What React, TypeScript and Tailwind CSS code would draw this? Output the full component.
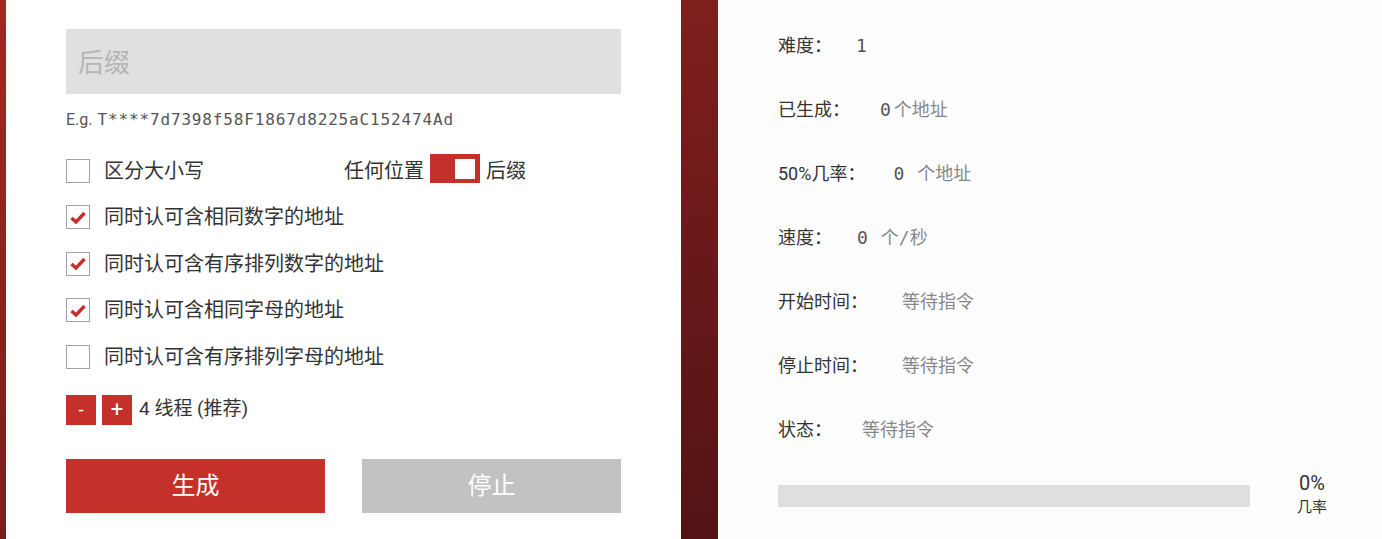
import React from 'react';

const RED = 'bg-[#c5302a]';

function Check({ checked }: { checked: boolean }) {
    return (
        <div className="w-[24px] h-[24px] border border-[#9ea3a8] bg-white flex items-center justify-center shrink-0">
            {checked && (
                <svg width="16" height="13" viewBox="0 0 16 13">
                    <path d="M1.5 7 L6 11 L14.5 2" fill="none" stroke="#c5302a" strokeWidth="3.4" strokeLinejoin="miter" />
                </svg>
            )}
        </div>
    );
}

function OptionRow({ label, checked }: { label: string; checked: boolean }) {
    return (
        <div className="flex items-center h-[24px]">
            <Check checked={checked} />
            <span className="ml-[14px] text-[20px] leading-[24px] text-[#333]">{label}</span>
        </div>
    );
}

function StatRow({ children }: { children: React.ReactNode }) {
    return <div className="h-[64px] flex items-center text-[18px] text-[#333]">{children}</div>;
}

const mono = "font-['DejaVu_Sans_Mono',monospace] text-[#555]";

export default function App() {
    return (
        <div className="w-[1382px] h-[539px] flex overflow-hidden font-[Roboto,'Noto_Sans_CJK_SC',sans-serif]">
            {/* left edge strip */}
            <div className="w-[6px] h-full bg-gradient-to-b from-[#a62621] to-[#7c1c1a]" />

            {/* settings card */}
            <div className="w-[675px] h-full bg-white px-[60px] pt-[29px]">
                <div className="h-[65px] bg-[#e0e0e0] flex items-center pl-[12px] pt-[3px] text-[26px] text-[#b5b5b5]">后缀</div>

                <div className="mt-[16px] h-[20px] flex items-center text-[16px] text-[#555]">
                    <span>E.g.</span>
                    <span className={`ml-[5px] ${mono} tracking-[0.85px]`}>T****7d7398f58F1867d8225aC152474Ad</span>
                </div>

                <div className="mt-[24px] flex items-end h-[29px]">
                    <div className="w-[278px] flex items-center h-[24px]">
                        <Check checked={false} />
                        <span className="ml-[14px] text-[20px] leading-[24px] text-[#333]">区分大小写</span>
                    </div>
                    <span className="text-[20px] leading-[24px] text-[#333]">任何位置</span>
                    <div className={`ml-[6px] w-[50px] h-[29px] ${RED} flex items-center justify-end pr-[5px]`}>
                        <div className="w-[20px] h-[20px] bg-white" />
                    </div>
                    <span className="ml-[6px] text-[20px] leading-[24px] text-[#333]">后缀</span>
                </div>

                <div className="mt-[22px] flex flex-col gap-[22.5px]">
                    <OptionRow label="同时认可含相同数字的地址" checked />
                    <OptionRow label="同时认可含有序排列数字的地址" checked />
                    <OptionRow label="同时认可含相同字母的地址" checked />
                    <OptionRow label="同时认可含有序排列字母的地址" checked={false} />
                </div>

                <div className="mt-[26px] flex items-center h-[30px]">
                    <div className={`w-[30px] h-[30px] ${RED} text-white text-[18px] flex items-center justify-center`}>-</div>
                    <div className={`ml-[6px] w-[30px] h-[30px] ${RED} text-white text-[22px] flex items-center justify-center`}>+</div>
                    <span className="ml-[7px] text-[19px] text-[#333]">4 线程 (推荐)</span>
                </div>

                <div className="mt-[34px] flex justify-between">
                    <div className={`w-[259px] h-[54px] ${RED} text-white text-[24px] flex items-center justify-center`}>生成</div>
                    <div className="w-[259px] h-[54px] bg-[#c2c2c2] text-white text-[24px] flex items-center justify-center">停止</div>
                </div>
            </div>

            {/* dark divider column */}
            <div className="w-[37px] h-full bg-gradient-to-b from-[#801e1e] to-[#521314]" />

            {/* stats panel */}
            <div className="flex-1 h-full bg-[#fdfdfd] pl-[60px] pt-[13px]">
                <StatRow>
                    <span>难度：</span>
                    <span className={`ml-[24px] ${mono}`}>1</span>
                </StatRow>
                <StatRow>
                    <span>已生成：</span>
                    <span className={`ml-[30px] ${mono}`}>0</span>
                    <span className="ml-[3px] text-[#888]">个地址</span>
                </StatRow>
                <StatRow>
                    <span>50%几率：</span>
                    <span className={`ml-[28px] ${mono}`}>0</span>
                    <span className="ml-[13px] text-[#888]">个地址</span>
                </StatRow>
                <StatRow>
                    <span>速度：</span>
                    <span className={`ml-[25px] ${mono}`}>0</span>
                    <span className="ml-[13px] text-[#888]">个<span className="font-['DejaVu_Sans_Mono',monospace]">/</span>秒</span>
                </StatRow>
                <StatRow>
                    <span>开始时间：</span>
                    <span className="ml-[34px] text-[#888]">等待指令</span>
                </StatRow>
                <StatRow>
                    <span>停止时间：</span>
                    <span className="ml-[34px] text-[#888]">等待指令</span>
                </StatRow>
                <StatRow>
                    <span>状态：</span>
                    <span className="ml-[30px] text-[#888]">等待指令</span>
                </StatRow>

                <div className="flex items-start">
                    <div className="mt-[24px] w-[472px] h-[22px] bg-[#dfdfdf]" />
                    <div className="ml-[30px] mt-[10px] w-[64px] flex flex-col items-center text-[#333]">
                        <span className="text-[20px] leading-[24px]">0%</span>
                        <span className="mt-[3px] text-[15px] leading-[18px]">几率</span>
                    </div>
                </div>
            </div>
        </div>
    );
}
